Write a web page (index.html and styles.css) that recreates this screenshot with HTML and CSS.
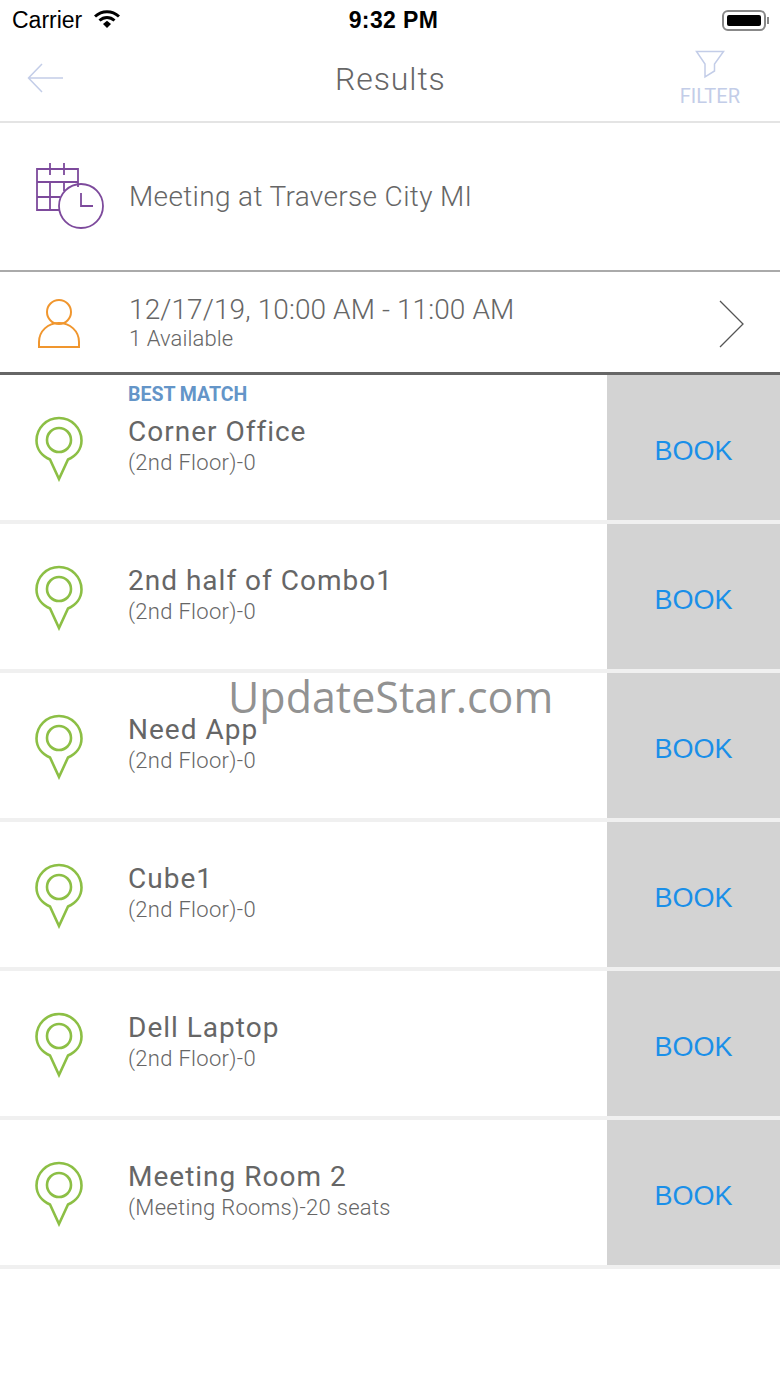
FILE: index.html
```html
<!DOCTYPE html>
<html>
<head>
    <meta charset="UTF-8">
    <meta name="viewport" content="width=device-width, initial-scale=1.0">
    <title>Results</title>
    <link rel="stylesheet" href="styles.css">
</head>
<body>
    <div class="status-bar">
        <div class="status-left">
            <span>Carrier</span>
            <svg class="wifi" width="26" height="20" viewBox="0 0 26 20">
                <path d="M1 7.5C8 1 18 1 25 7.5" fill="none" stroke="#000" stroke-width="3"/>
                <path d="M5.5 11.500C10 7.500 16 7.500 20.500 11.500" fill="none" stroke="#000" stroke-width="3"/>
                <path d="M9 15L13 11.800L17 15L13 19Z" fill="#000"/>
            </svg>
        </div>
        <div class="status-time">9:32 PM</div>
        <div class="status-right">
            <span class="battery"><span class="battery-fill"></span></span>
            <span class="battery-tip"></span>
        </div>
    </div>

    <div class="nav-bar">
        <svg class="back" width="36" height="30" viewBox="0 0 36 30">
            <path d="M36 15H2M15 1L1.500 15L15 29" fill="none" stroke="#c3cde8" stroke-width="1.5"/>
        </svg>
        <div class="nav-title">Results</div>
        <div class="filter">
            <svg width="30" height="29" viewBox="0 0 30 29">
                <path d="M1.500 1.500H28.500L19.500 14V21L10 27V14Z" fill="none" stroke="#c3cde8" stroke-width="1.5"/>
            </svg>
            <span>FILTER</span>
        </div>
    </div>

    <div class="meeting-row">
        <svg class="row-icon" width="70" height="68" viewBox="0 0 70 68">
            <g fill="none" stroke="#7d4a9c" stroke-width="1.8">
                <path d="M42 24V6H1V47H24"/>
                <path d="M1 19H42M1 34H24M14 19V47M28 19V28M14 0V12M28 0V12"/>
                <circle cx="45" cy="43" r="22"/>
                <path d="M45 30V43H57"/>
            </g>
        </svg>
        <div class="meeting-text">Meeting at Traverse City MI</div>
    </div>

    <div class="date-row">
        <svg class="person" width="42" height="50" viewBox="0 0 42 50">
            <g fill="none" stroke="#f0962e" stroke-width="2">
                <circle cx="21" cy="13" r="12"/>
                <path d="M1 48V43C1 32 10 24 21 24C32 24 41 32 41 43V48Z"/>
            </g>
        </svg>
        <div class="date-text">
            <div class="date-main">12/17/19, 10:00 AM - 11:00 AM</div>
            <div class="date-sub">1 Available</div>
        </div>
        <svg class="chevron" width="26" height="48" viewBox="0 0 26 48">
            <path d="M1 1L24 24L1 47" fill="none" stroke="#555" stroke-width="1.3"/>
        </svg>
    </div>

    <div class="results">
        <div class="result">
            <svg class="pin" width="48" height="66" viewBox="0 0 48 66"><use href="#pin-shape"/></svg>
            <div class="result-text">
                <div class="best-match">BEST MATCH</div>
                <div class="result-name">Corner Office</div>
                <div class="result-sub">(2nd Floor)-0</div>
            </div>
            <div class="book">BOOK</div>
        </div>
        <div class="result">
            <svg class="pin" width="48" height="66" viewBox="0 0 48 66"><use href="#pin-shape"/></svg>
            <div class="result-text">
                <div class="result-name">2nd half of Combo1</div>
                <div class="result-sub">(2nd Floor)-0</div>
            </div>
            <div class="book">BOOK</div>
        </div>
        <div class="result">
            <svg class="pin" width="48" height="66" viewBox="0 0 48 66"><use href="#pin-shape"/></svg>
            <div class="result-text">
                <div class="result-name">Need App</div>
                <div class="result-sub">(2nd Floor)-0</div>
            </div>
            <div class="book">BOOK</div>
        </div>
        <div class="result">
            <svg class="pin" width="48" height="66" viewBox="0 0 48 66"><use href="#pin-shape"/></svg>
            <div class="result-text">
                <div class="result-name">Cube1</div>
                <div class="result-sub">(2nd Floor)-0</div>
            </div>
            <div class="book">BOOK</div>
        </div>
        <div class="result">
            <svg class="pin" width="48" height="66" viewBox="0 0 48 66"><use href="#pin-shape"/></svg>
            <div class="result-text">
                <div class="result-name">Dell Laptop</div>
                <div class="result-sub">(2nd Floor)-0</div>
            </div>
            <div class="book">BOOK</div>
        </div>
        <div class="result">
            <svg class="pin" width="48" height="66" viewBox="0 0 48 66"><use href="#pin-shape"/></svg>
            <div class="result-text">
                <div class="result-name">Meeting Room 2</div>
                <div class="result-sub">(Meeting Rooms)-20 seats</div>
            </div>
            <div class="book">BOOK</div>
        </div>
    </div>

    <div class="watermark">UpdateStar.com</div>

    <svg class="defs" width="0" height="0">
        <defs>
            <g id="pin-shape" fill="none" stroke="#8cbf45" stroke-width="2.6">
                <path d="M15 43.500C7 40 1.500 33 1.500 24.500C1.500 12 11.500 2 24 2C36.500 2 46.500 12 46.500 24.500C46.500 33 41 40 33 43.500L24 63Z"/>
                <circle cx="24" cy="24" r="12"/>
            </g>
        </defs>
    </svg>
</body>
</html>
```

FILE: styles.css
```css
* {
    box-sizing: border-box;
}

body {
    margin: 0;
    position: relative;
    height: 1387px;
    overflow: hidden;
    background-color: #fff;
    font-family: Roboto, "Liberation Sans", sans-serif;
    font-weight: 300;
    color: #666;
}

.status-bar {
    height: 40px;
    padding: 0 11px 0 12px;
    display: grid;
    grid-template-columns: 1fr auto 1fr;
    align-items: center;
    font-family: "Liberation Sans", sans-serif;
    font-weight: 400;
    color: #000;
}

.status-left {
    display: flex;
    align-items: center;
    gap: 12px;
    font-size: 23px;
}

.wifi {
    margin-top: -3px;
}

.status-time {
    font-size: 23px;
    font-weight: 700;
    letter-spacing: 0.4px;
    margin-left: 6px;
}

.status-right {
    display: flex;
    justify-content: flex-end;
    align-items: center;
    gap: 1px;
}

.battery {
    width: 44px;
    height: 21px;
    padding: 3px;
    border: 2px solid #888;
    border-radius: 6px;
}

.battery-fill {
    display: block;
    height: 100%;
    background-color: #000;
    border-radius: 2px;
}

.battery-tip {
    width: 2px;
    height: 7px;
    background-color: #888;
}

.nav-bar {
    height: 83px;
    padding: 0 40px 0 27px;
    display: flex;
    align-items: center;
    justify-content: space-between;
    border-bottom: 2px solid #e4e4e4;
}

.back {
    margin-top: -6px;
}

.nav-title {
    font-size: 32px;
    margin-top: -4px;
    margin-left: 38px;
    letter-spacing: 0.9px;
}

.filter {
    display: flex;
    flex-direction: column;
    align-items: center;
    gap: 5px;
    margin-top: -4px;
    font-size: 20px;
    font-weight: 400;
    color: #c3cde8;
}

.filter svg {
    display: block;
}

.meeting-row {
    height: 149px;
    padding-left: 36px;
    display: flex;
    align-items: center;
    border-bottom: 2px solid #aaa;
}

.row-icon {
    margin-right: 23px;
}

.meeting-text {
    font-size: 28px;
    letter-spacing: 0.35px;
}

.date-row {
    height: 103px;
    padding: 0 35px 0 38px;
    display: flex;
    align-items: center;
    border-bottom: 3px solid #666;
}

.person {
    margin-right: 49px;
    margin-top: 4px;
}

.date-text {
    flex: 1;
}

.date-main {
    font-size: 28px;
    letter-spacing: 0.1px;
}

.date-sub {
    font-size: 22px;
    letter-spacing: 0.1px;
}

.chevron {
    margin-top: 4px;
}

.result {
    height: 149px;
    display: flex;
    align-items: stretch;
    position: relative;
    border-bottom: 4px solid #f0f0f0;
}

.pin {
    align-self: center;
    margin: 3px 45px 0 35px;
    flex-shrink: 0;
}

.result-text {
    flex: 1;
    display: flex;
    flex-direction: column;
    justify-content: center;
    padding-bottom: 6px;
}

.best-match {
    position: absolute;
    top: 8px;
    font-size: 19.5px;
    font-weight: 700;
    color: #6495c8;
}

.result-name {
    font-size: 28px;
    font-weight: 400;
    letter-spacing: 1px;
    margin-bottom: 2px;
}

.result-sub {
    font-size: 22px;
    letter-spacing: 0.3px;
}

.book {
    width: 173px;
    flex-shrink: 0;
    padding-top: 7px;
    display: flex;
    align-items: center;
    justify-content: center;
    background-color: #d3d3d3;
    font-family: "Liberation Sans", sans-serif;
    font-size: 27px;
    font-weight: 400;
    color: #1a8fe8;
}

.watermark {
    position: absolute;
    left: 228px;
    top: 667px;
    font-family: "Open Sans", sans-serif;
    font-size: 43px;
    font-weight: 400;
    color: rgba(110, 110, 110, 0.75);
}

.defs {
    position: absolute;
}
```
